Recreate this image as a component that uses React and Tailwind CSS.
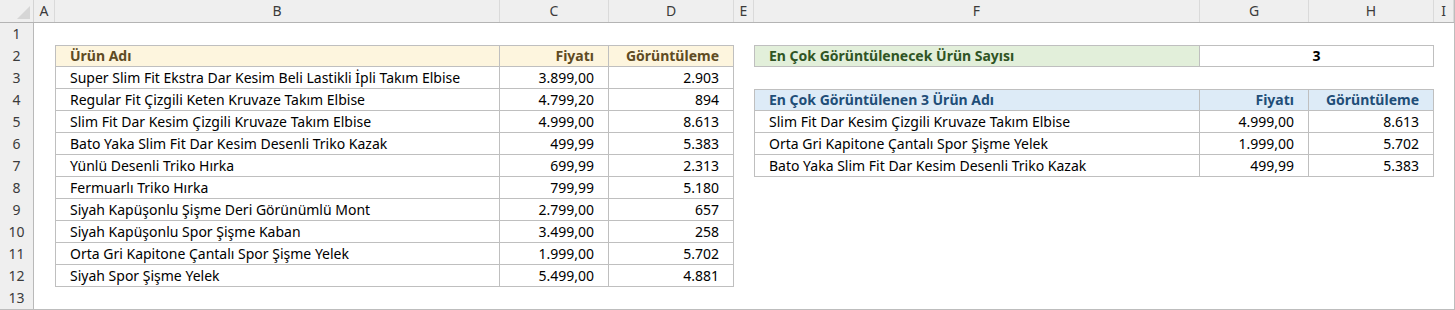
const COLS = [
  { key: "A", w: "w-[21px]" },
  { key: "B", w: "w-[445px]" },
  { key: "C", w: "w-[109px]" },
  { key: "D", w: "w-[125px]" },
  { key: "E", w: "w-[20px]" },
  { key: "F", w: "w-[446px]" },
  { key: "G", w: "w-[109px]" },
  { key: "H", w: "w-[125px]" },
  { key: "I", w: "w-[20px]" },
];

const products = [
  ["Super Slim Fit Ekstra Dar Kesim Beli Lastikli İpli Takım Elbise", "3.899,00", "2.903"],
  ["Regular Fit Çizgili Keten Kruvaze Takım Elbise", "4.799,20", "894"],
  ["Slim Fit Dar Kesim Çizgili Kruvaze Takım Elbise", "4.999,00", "8.613"],
  ["Bato Yaka Slim Fit Dar Kesim Desenli Triko Kazak", "499,99", "5.383"],
  ["Yünlü Desenli Triko Hırka", "699,99", "2.313"],
  ["Fermuarlı Triko Hırka", "799,99", "5.180"],
  ["Siyah Kapüşonlu Şişme Deri Görünümlü Mont", "2.799,00", "657"],
  ["Siyah Kapüşonlu Spor Şişme Kaban", "3.499,00", "258"],
  ["Orta Gri Kapitone Çantalı Spor Şişme Yelek", "1.999,00", "5.702"],
  ["Siyah Spor Şişme Yelek", "5.499,00", "4.881"],
];

const top3 = [
  ["Slim Fit Dar Kesim Çizgili Kruvaze Takım Elbise", "4.999,00", "8.613"],
  ["Orta Gri Kapitone Çantalı Spor Şişme Yelek", "1.999,00", "5.702"],
  ["Bato Yaka Slim Fit Dar Kesim Desenli Triko Kazak", "499,99", "5.383"],
];

function Cell({ w, className = "", children }) {
  return (
    <div className={`${w} h-[22px] shrink-0 flex items-center whitespace-nowrap overflow-hidden ${className}`}>
      {children}
    </div>
  );
}

function RowNum({ n }) {
  return (
    <div className="w-[34px] h-[22px] shrink-0 flex items-center justify-center bg-[#efefef] border-r border-[#b9b9b9] text-[#3b3b3b]">
      {n}
    </div>
  );
}

const bd = "border-[#bfbfbf]";

// builds the cells of one sheet row, keyed by column letter
function cellsFor(r) {
  const c = {};
  const t1 = r >= 2 && r <= 12;
  const t3 = r >= 4 && r <= 7;

  if (t1) {
    const head = r === 2;
    const top = head ? "border-t" : "";
    const fill = head ? "bg-[#fdf5de] font-bold text-[#5f4b23]" : "text-black";
    const row = head ? ["Ürün Adı", "Fiyatı", "Görüntüleme"] : products[r - 3];
    c.B = <Cell w="w-[445px]" className={`${top} border-l border-r border-b ${bd} ${fill} pl-[14px]`}>{row[0]}</Cell>;
    c.C = <Cell w="w-[109px]" className={`${top} border-r border-b ${bd} ${fill} justify-end pr-[14px]`}>{row[1]}</Cell>;
    c.D = <Cell w="w-[125px]" className={`${top} border-r border-b ${bd} ${fill} justify-end pr-[14px]`}>{row[2]}</Cell>;
  }

  if (r === 2) {
    c.F = (
      <Cell w="w-[446px]" className={`border border-[#bfbfbf] bg-[#e2efda] font-bold text-[#2f5424] pl-[14px]`}>
        En Çok Görüntülenecek Ürün Sayısı
      </Cell>
    );
    c.G = (
      <Cell w="w-[234px]" className={`border-t border-r border-b ${bd} justify-center font-bold text-black`}>
        3
      </Cell>
    );
    c.H = null;
  }

  if (t3) {
    const head = r === 4;
    const top = head ? "border-t" : "";
    const fill = head ? "bg-[#ddebf7] font-bold text-[#1f4e78]" : "text-black";
    const row = head ? ["En Çok Görüntülenen 3 Ürün Adı", "Fiyatı", "Görüntüleme"] : top3[r - 5];
    c.F = <Cell w="w-[446px]" className={`${top} border-l border-r border-b ${bd} ${fill} pl-[14px]`}>{row[0]}</Cell>;
    c.G = <Cell w="w-[109px]" className={`${top} border-r border-b ${bd} ${fill} justify-end pr-[14px]`}>{row[1]}</Cell>;
    c.H = <Cell w="w-[125px]" className={`${top} border-r border-b ${bd} ${fill} justify-end pr-[14px]`}>{row[2]}</Cell>;
  }

  return c;
}

export default function App() {
  const rows = Array.from({ length: 13 }, (_, i) => i + 1);

  return (
    <div className="w-[1455px] h-[310px] bg-white border-r border-b border-[#bdbdbd] overflow-hidden font-['Noto_Sans',sans-serif] text-[14px] leading-none">
      {/* column letters */}
      <div className="flex h-[23px] bg-[#efefef] border-b border-[#b4b4b4] text-[#3b3b3b]">
        <div className="w-[34px] shrink-0 border-r border-[#d4d4d4] flex items-end justify-end pr-[3px] pb-[3px]">
          <svg width="13" height="13" viewBox="0 0 13 13">
            <polygon points="13,0 13,13 0,13" fill="#d6d6d6" />
          </svg>
        </div>
        {COLS.map((col) => (
          <div key={col.key} className={`${col.w} shrink-0 border-r border-[#dadada] flex items-center justify-center`}>
            {col.key}
          </div>
        ))}
      </div>

      {rows.map((r) => {
        const c = cellsFor(r);
        return (
          <div key={r} className="flex">
            <RowNum n={r} />
            {COLS.map((col) => {
              if (col.key in c) return c[col.key] ? <div key={col.key} className="contents">{c[col.key]}</div> : null;
              return <Cell key={col.key} w={col.w} />;
            })}
          </div>
        );
      })}
    </div>
  );
}
